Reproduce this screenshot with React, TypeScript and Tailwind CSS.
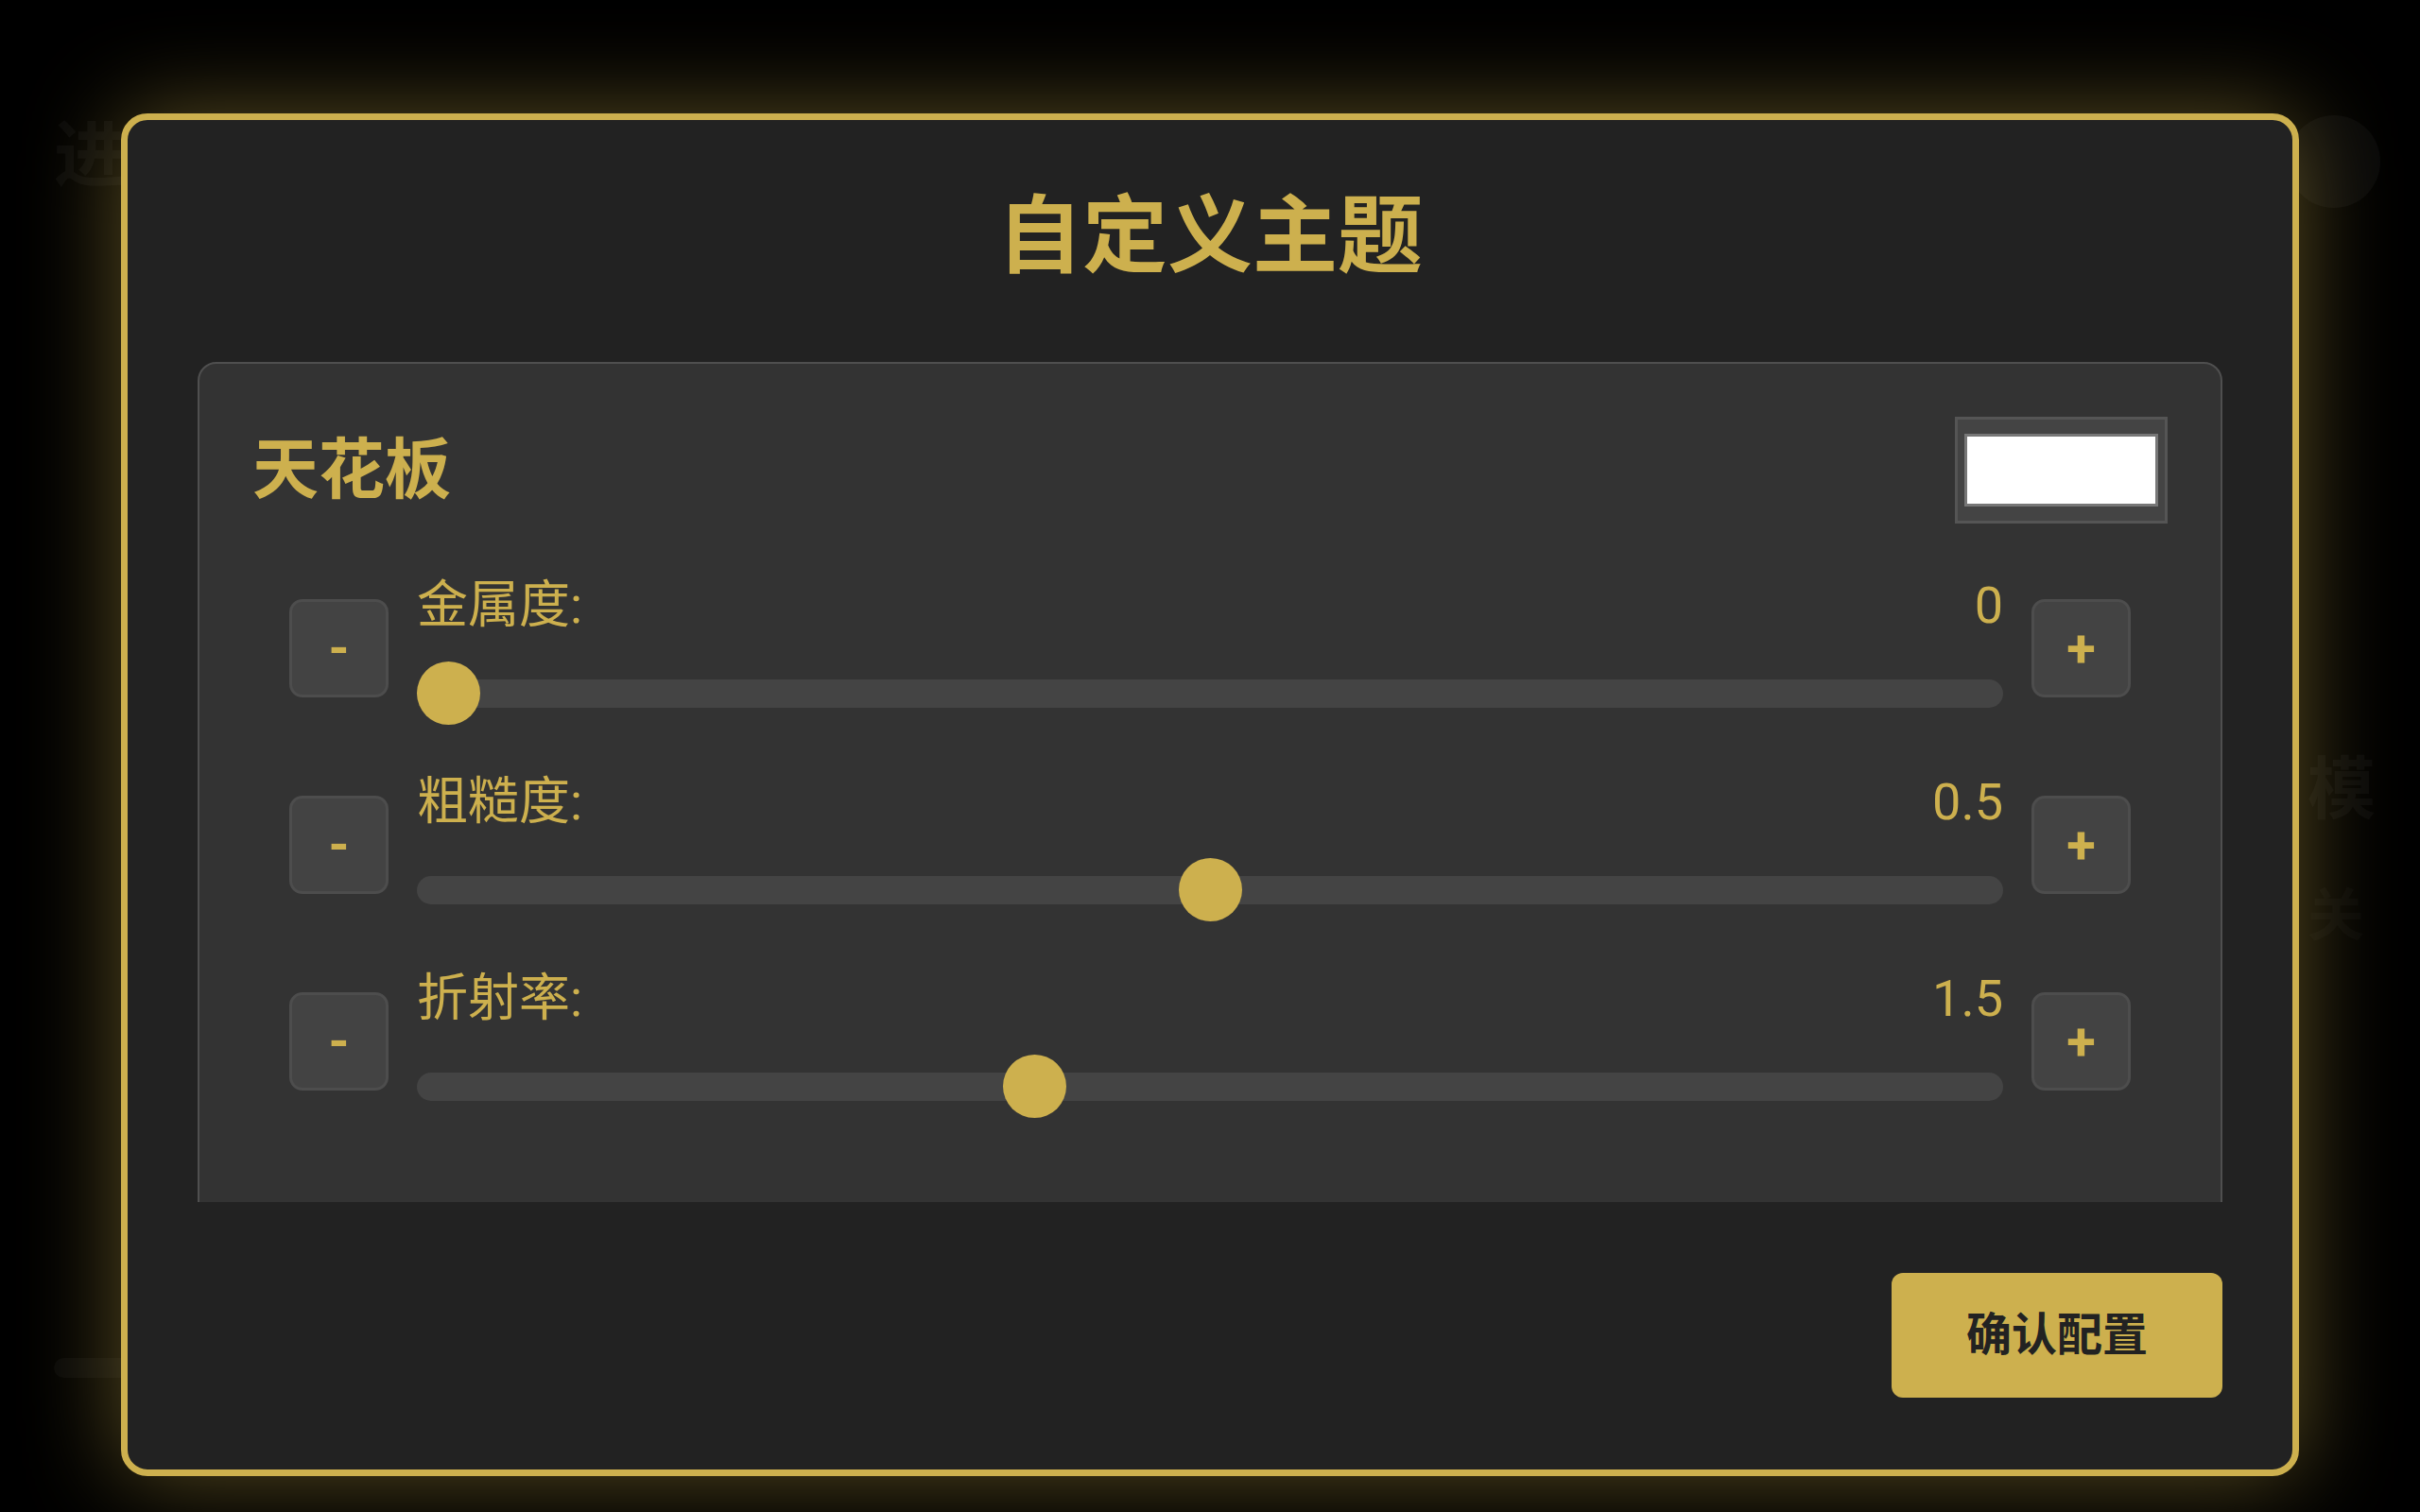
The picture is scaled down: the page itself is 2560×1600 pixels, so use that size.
import React from 'react';

interface SliderRow {
  label: string;
  value: number;
  display: string;
  min: number;
  max: number;
}

const rows: SliderRow[] = [
  { label: '金属度:', value: 0, display: '0', min: 0, max: 1 },
  { label: '粗糙度:', value: 0.5, display: '0.5', min: 0, max: 1 },
  { label: '折射率:', value: 1.5, display: '1.5', min: 1, max: 2.3 },
];

function StepButton({ children }: { children: React.ReactNode }) {
  return (
    <button className="flex h-[104px] w-[105px] flex-shrink-0 items-center justify-center rounded-[14px] border-[3px] border-[#4d4d4d] bg-[#434343] text-[56px] font-bold leading-none text-[#cdb04e]">
      {children}
    </button>
  );
}

function Slider({ row }: { row: SliderRow }) {
  const frac = (row.value - row.min) / (row.max - row.min);
  return (
    <div className="flex items-center gap-[30px] px-[39px]">
      <StepButton>-</StepButton>
      <div className="flex flex-1 flex-col">
        <div className="flex h-[64px] items-center justify-between pt-[10px] text-[54px] leading-[64px] text-[#cdb04e]">
          <span>{row.label}</span>
          <span>{row.display}</span>
        </div>
        <div className="relative mt-[32px] flex h-[67px] items-center">
          <div className="h-[30px] w-full rounded-full bg-[#444444]" />
          {/* thumb */}
          <div
            className="absolute top-0 h-[67px] w-[67px] rounded-full bg-[#cdb04e]"
            style={{ left: `calc(${frac} * (100% - 67px))` }}
          />
        </div>
      </div>
      <StepButton>+</StepButton>
    </div>
  );
}

export default function App() {
  return (
    <div className="relative h-[1600px] w-full overflow-hidden bg-black font-[Roboto,'Noto_Sans_CJK_SC',sans-serif]">
      {/* page behind the overlay */}
      <div className="absolute left-[57px] top-[127px] text-[76px] font-bold leading-none text-white/[0.035]">进</div>
      <div className="absolute left-[2420px] top-[122px] h-[98px] w-[98px] rounded-full bg-white/[0.035]" />
      <div className="absolute left-[2441px] top-[800px] text-[72px] font-bold leading-none text-white/[0.035]">模</div>
      <div className="absolute left-[2441px] top-[940px] text-[60px] font-bold leading-none text-white/[0.025]">关</div>
      <div className="absolute left-[57px] top-[1437px] h-[21px] w-[120px] rounded-full bg-white/[0.03]" />

      {/* 弹窗 */}
      <div className="relative mx-auto mt-[120px] flex h-[1442px] w-[2304px] flex-col rounded-[28px] border-[7px] border-[#cdb04e] bg-[#222222] px-[74px] pb-[76px] pt-[75px] shadow-[0_0_100px_rgba(205,176,78,0.45)]">
        <h1 className="mb-[83px] h-[98px] text-center text-[90px] font-bold leading-[98px] text-[#cdb04e]">
          自定义主题
        </h1>

        <div className="min-h-0 flex-1 overflow-hidden">
          <div className="rounded-[20px] border-2 border-[#4f4f4f] bg-[#333333] px-[56px] pb-[160px] pt-[56px]">
            <div className="flex h-[113px] items-center justify-between">
              <h2 className="text-[70px] font-bold leading-none text-[#cdb04e]">天花板</h2>
              <div className="h-[113px] w-[225px] border-[3px] border-[#555555] bg-[#444444] px-[7px] py-[15px]">
                <div className="h-full w-full border-[3px] border-[#777777] bg-white" />
              </div>
            </div>

            <div className="mt-[50px] flex flex-col gap-[45px]">
              {rows.map((row) => (
                <Slider key={row.label} row={row} />
              ))}
            </div>
          </div>
        </div>

        <div className="mt-[75px] flex justify-end">
          <button className="h-[132px] w-[350px] rounded-[12px] bg-[#cdb04e] text-[48px] font-bold text-[#222222]">
            确认配置
          </button>
        </div>
      </div>
    </div>
  );
}
